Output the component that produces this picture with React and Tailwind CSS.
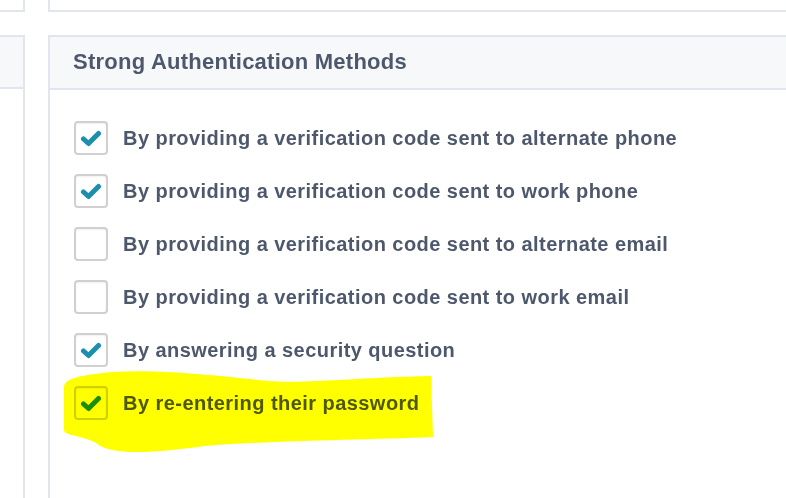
import React from "react";

const items = [
  { label: "By providing a verification code sent to alternate phone", checked: true },
  { label: "By providing a verification code sent to work phone", checked: true },
  { label: "By providing a verification code sent to alternate email", checked: false },
  { label: "By providing a verification code sent to work email", checked: false },
  { label: "By answering a security question", checked: true },
  { label: "By re-entering their password", checked: true },
];

function Check() {
  return (
    <svg width="22" height="18" viewBox="0 0 22 18">
      <path d="M3.5 10 L8.5 14.5 L18.5 4.5" fill="none" stroke="#1b8fab" strokeWidth="5" strokeLinecap="round" strokeLinejoin="round" />
    </svg>
  );
}

export default function App() {
  return (
    <div className="relative w-[786px] h-[498px] overflow-hidden bg-white flex font-['Liberation_Sans',Arial,sans-serif]">
      <div className="w-[25px] flex flex-col">
        <div className="h-[12px] border-r-2 border-b-2 border-[#e1e5ee]" />
        <div className="mt-[23px] flex-1 border-t-2 border-r-2 border-[#e1e5ee]">
          <div className="h-[52px] bg-[#f7f8fa] border-b-2 border-[#e1e5ee]" />
        </div>
      </div>
      <div className="ml-[23px] flex-1 flex flex-col">
        <div className="h-[12px] border-l-2 border-b-2 border-[#e1e5ee]" />
        <div className="mt-[23px] flex-1 border-t-2 border-l-2 border-[#e1e5ee]">
          <div className="h-[53px] bg-[#f7f8fa] border-b-2 border-[#e1e5ee] flex items-center pl-[23px] pb-[3px]">
            <span className="text-[22px] font-bold text-[#4e586c] tracking-[0.25px]">Strong Authentication Methods</span>
          </div>
          <div className="pt-[31px] pl-[24px] flex flex-col gap-[19px]">
            {items.map((it) => (
              <div key={it.label} className="flex items-center h-[34px]">
                <div className="w-[34px] h-[34px] rounded-[4px] border-2 border-[#d0d0d0] bg-white flex items-center justify-center shadow-[inset_0_1px_2px_rgba(0,0,0,0.06)]">
                  {it.checked && <Check />}
                </div>
                <span className="ml-[15px] text-[20px] font-bold text-[#4e586c] tracking-[0.45px]">{it.label}</span>
              </div>
            ))}
          </div>
        </div>
      </div>
      <svg className="absolute left-0 top-0 pointer-events-none mix-blend-multiply" width="786" height="498">
        <path d="M64,386 C66,378 82,375 112,372 C160,369 220,376 258,380 C300,385 340,378 431,376 L433,437 C360,440 260,441 205,446 C160,452 112,457 96,443 C82,435 64,436 64,430 Z" fill="#ffff00" />
      </svg>
    </div>
  );
}
